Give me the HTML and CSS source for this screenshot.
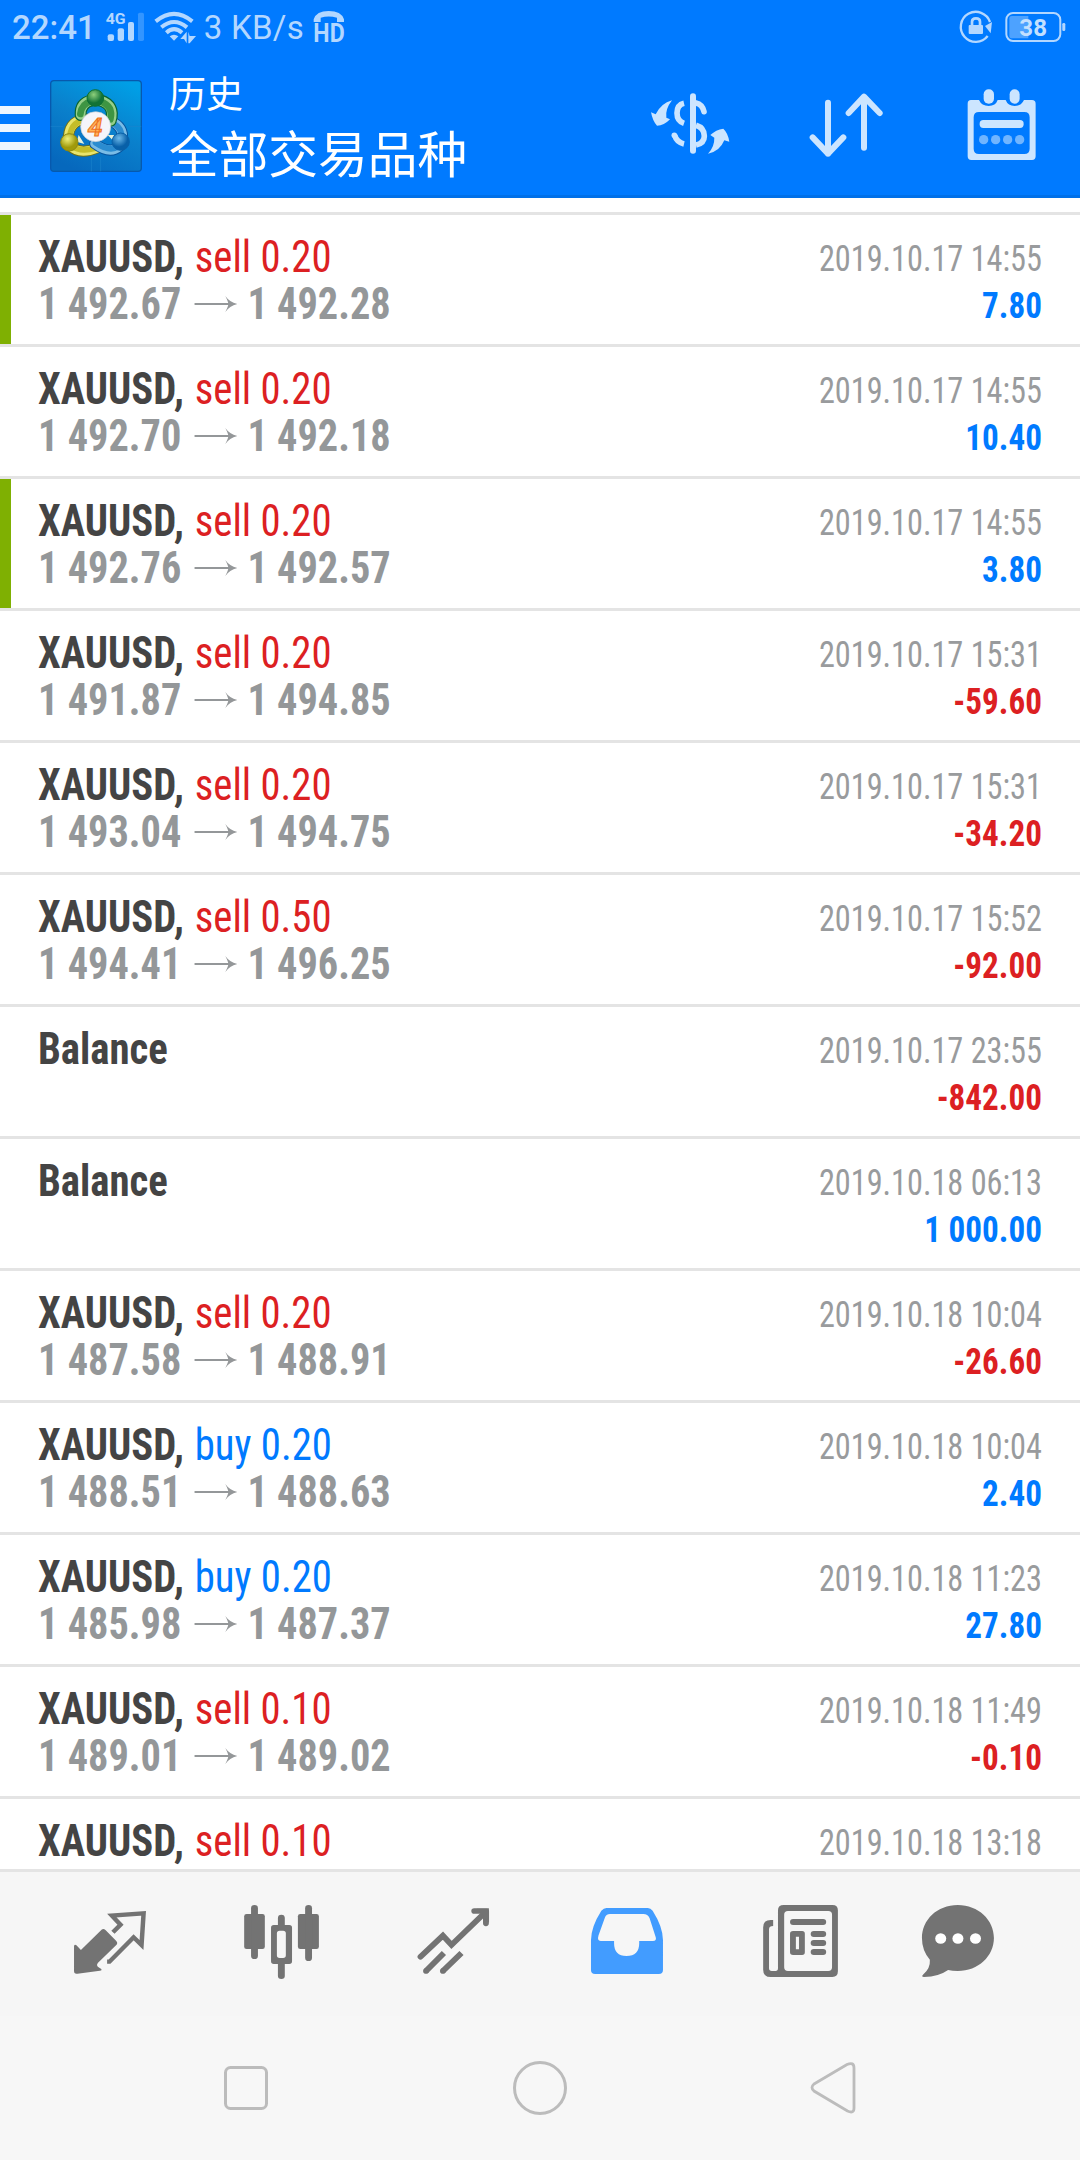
FILE: index.html
```html
<!DOCTYPE html>
<html lang="zh">
<head>
<meta charset="utf-8">
<title>历史</title>
<link rel="stylesheet" href="styles.css">
</head>
<body>
<svg width="0" height="0" class="defs">
  <symbol id="arrow" viewBox="0 0 43 18" preserveAspectRatio="none"><path d="M0 9h36" stroke="#949799" stroke-width="2" fill="none"/><path d="M31 1Q35 7 43 9Q35 11 31 17Q34 11 34 9Q34 7 31 1Z" fill="#949799"/></symbol>
</svg>
<header class="top">
  <div class="status">
    <span class="time">22:41</span>
    <svg class="signal" viewBox="318 30 116 100">
      <text x="317" y="71" font-size="43" font-weight="700" textLength="60" lengthAdjust="spacingAndGlyphs" fill="#b3d7ff">4G</text>
      <g fill="#b3d7ff"><rect x="323" y="103" width="19" height="20" rx="6"/><rect x="353" y="85" width="19" height="38" rx="6"/><rect x="384" y="66" width="18" height="57" rx="6"/></g>
      <rect x="414" y="38" width="18" height="85" rx="5" fill="#3395ff"/>
    </svg>
    <svg class="wifi" viewBox="462 30 128 105">
      <g fill="none" stroke="#b3d7ff" stroke-width="12"><path d="M467 64Q522 19 577 64"/><path d="M484 82Q522 50 561 82"/><path d="M499 98Q522 77 546 98"/></g>
      <path d="M509 109Q522 100 535 109L522 122Z" fill="#b3d7ff"/>
      <path d="M541 117L560 95V130L552 117ZM565 95L569 108H588L569 130H565Z" fill="#b3d7ff"/>
    </svg>
    <span class="speed">3 KB/s</span>
    <svg class="hd" viewBox="940 30 96 100">
      <path d="M942 66V58Q950 33 987 33Q1025 33 1033 58V66H1012V53Q987 46 963 53V66Z" fill="#b3d7ff"/>
      <text x="941" y="126" font-size="77" font-weight="700" textLength="94" lengthAdjust="spacingAndGlyphs" fill="#b3d7ff">HD</text>
    </svg>
    <svg class="lock" viewBox="180 30 98 102">
      <path d="M263 108A45 45 0 1 1 270 66" fill="none" stroke="#b3d7ff" stroke-width="7"/>
      <path d="M255 78L276 66L272 100Z" fill="#b3d7ff"/>
      <rect x="206" y="75" width="43" height="27" rx="3" fill="#b3d7ff"/>
      <path d="M216 76V65Q216 55 228 55Q240 55 240 65V76" fill="none" stroke="#b3d7ff" stroke-width="8"/>
    </svg>
    <svg class="battery" viewBox="314 30 184 102">
      <path d="M327 55Q327 48 335 48H384V115H335Q327 115 327 107Z" fill="#4da2ff"/>
      <rect x="318" y="39" width="162" height="84" rx="20" fill="none" stroke="#b3d7ff" stroke-width="6"/>
      <rect x="486" y="69" width="9" height="24" rx="4" fill="#b3d7ff"/>
      <text x="357" y="107" font-size="71" font-weight="700" textLength="83" lengthAdjust="spacingAndGlyphs" fill="#c3e0ff">38</text>
    </svg>
  </div>
  <div class="bar">
    <div class="menu"><i></i><i></i><i></i></div>
    <svg class="logo" viewBox="150 240 276 276">
      <defs>
        <linearGradient id="bg" x1=".8" y1="0" x2=".3" y2="1"><stop offset="0" stop-color="#009fe6"/><stop offset=".5" stop-color="#0a80cc"/><stop offset="1" stop-color="#0668bd"/></linearGradient>
        <radialGradient id="gg" cx=".4" cy=".3"><stop offset="0" stop-color="#8ed07c"/><stop offset="1" stop-color="#127236"/></radialGradient>
        <radialGradient id="yg" cx=".4" cy=".3"><stop offset="0" stop-color="#f0f07a"/><stop offset="1" stop-color="#a09a0b"/></radialGradient>
        <radialGradient id="ug" cx=".4" cy=".3"><stop offset="0" stop-color="#6cb9ea"/><stop offset="1" stop-color="#0860a8"/></radialGradient>
      </defs>
      <rect x="152" y="242" width="272" height="272" rx="10" fill="url(#bg)" stroke="#0759ad" stroke-width="4"/>
      <path d="M152 379H190M385 379H424M274 472V514M302 472V514" stroke="#1a84cb" stroke-width="2"/>
      <g fill="none" stroke-linecap="round">
        <path d="M262 358Q210 358 205 410M210 437Q238 466 292 444" stroke="#716f13" stroke-width="33"/>
        <path d="M262 358Q210 358 205 410M210 437Q238 466 292 444" stroke="#e9e46c" stroke-width="27"/>
        <path d="M259 361Q215 361 209 410M215 438Q240 457 285 445" stroke="#c5bd28" stroke-width="17"/>
        <path d="M332 363Q373 380 367 420M358 440Q330 465 284 431" stroke="#07539c" stroke-width="33"/>
        <path d="M332 363Q373 380 367 420M358 440Q330 465 284 431" stroke="#7abce6" stroke-width="27"/>
        <path d="M336 369Q368 382 364 418M354 439Q330 457 287 428" stroke="#2b8cd0" stroke-width="18"/>
        <path d="M242 345Q240 309 275 301M300 301Q347 316 332 362" stroke="#0b632d" stroke-width="36"/>
        <path d="M242 345Q240 309 275 301M300 301Q347 316 332 362" stroke="#96cf89" stroke-width="29"/>
        <path d="M241 342Q245 311 275 304M300 304Q341 318 331 358" stroke="#3e9543" stroke-width="20"/>
      </g>
      <path d="M236 405L253 432L230 425ZM323 405H342L338 421Z" fill="#e6f2db"/>
      <circle cx="286" cy="294" r="25" fill="url(#gg)" stroke="#0d7133" stroke-width="3"/>
      <circle cx="208" cy="427" r="26" fill="url(#yg)" stroke="#8f8912" stroke-width="3"/>
      <circle cx="362" cy="425" r="26" fill="url(#ug)" stroke="#0960a8" stroke-width="3"/>
      <circle cx="287" cy="380" r="45" fill="#f5f5fa" stroke="#c3cbd2" stroke-width="2"/>
      <text x="263" y="407" font-size="76" font-weight="700" font-style="italic" textLength="44" lengthAdjust="spacingAndGlyphs" fill="#ffb45c" stroke="#ee701c" stroke-width="3">4</text>
    </svg>
    <div class="heads"><div class="h1">历史</div><div class="h2">全部交易品种</div></div>
    <svg class="dollar" viewBox="90 70 240 184" fill="#cce5ff">
      <rect x="210" y="71" width="18" height="181" rx="9"/>
      <g fill="none" stroke="#cce5ff" stroke-width="17"><path d="M192 101Q171 106 171 130Q171 154 192 161"/><path d="M228 100Q247 104 252 126" stroke-linecap="round"/><path d="M228 167Q253 175 253 199Q253 221 228 226"/><path d="M164 197Q170 218 192 223"/></g><circle cx="163" cy="197" r="8.5"/>
      <path d="M156 92Q135 119 139 144L150 149Q132 168 111 168Q98 155 93 128L107 134Q123 101 156 92Z"/>
      <path d="M264 252Q284 231 283 204L271 196Q288 180 310 177Q324 190 328 216L313 212Q299 246 264 252Z"/>
    </svg>
    <svg class="sort" viewBox="567 70 222 194"><path d="M624 99V252M578 203L624 252L670 203M732 234V82M686 130L732 81L779 130" fill="none" stroke="#cce5ff" stroke-width="18" stroke-linecap="round" stroke-linejoin="round"/></svg>
    <svg class="calendar" viewBox="202 267 208 216">
      <path fill="#cce5ff" fill-rule="evenodd" d="M214 300H238Q246 318 267 318Q288 318 294 300H318Q325 318 345 318Q365 318 373 300H397Q408 300 408 311V469Q408 480 397 480H215Q204 480 204 469V311Q204 300 214 300ZM238 336Q222 336 222 352V446Q222 462 238 462H374Q390 462 390 446V352Q390 336 374 336Z"/>
      <rect x="252" y="268" width="31" height="43" rx="15" fill="#cce5ff"/><rect x="330" y="268" width="30" height="43" rx="15" fill="#cce5ff"/>
      <rect x="240" y="360" width="132" height="24" rx="11" fill="#cce5ff"/>
      <g fill="#70b5ff"><circle cx="252" cy="419" r="14"/><circle cx="288" cy="419" r="14"/><circle cx="324" cy="419" r="14"/><circle cx="360" cy="419" r="14"/></g>
    </svg>
  </div>
</header>
<main class="list">
  <div class="row marked"><div class="deal"><div class="name"><b>XAUUSD,</b> <span class="sell">sell 0.20</span></div><div class="price">1 492.67<svg><use href="#arrow"/></svg>1 492.28</div></div><div class="info"><div class="date">2019.10.17 14:55</div><div class="sum up">7.80</div></div></div>
  <div class="row"><div class="deal"><div class="name"><b>XAUUSD,</b> <span class="sell">sell 0.20</span></div><div class="price">1 492.70<svg><use href="#arrow"/></svg>1 492.18</div></div><div class="info"><div class="date">2019.10.17 14:55</div><div class="sum up">10.40</div></div></div>
  <div class="row marked"><div class="deal"><div class="name"><b>XAUUSD,</b> <span class="sell">sell 0.20</span></div><div class="price">1 492.76<svg><use href="#arrow"/></svg>1 492.57</div></div><div class="info"><div class="date">2019.10.17 14:55</div><div class="sum up">3.80</div></div></div>
  <div class="row"><div class="deal"><div class="name"><b>XAUUSD,</b> <span class="sell">sell 0.20</span></div><div class="price">1 491.87<svg><use href="#arrow"/></svg>1 494.85</div></div><div class="info"><div class="date">2019.10.17 15:31</div><div class="sum down">-59.60</div></div></div>
  <div class="row"><div class="deal"><div class="name"><b>XAUUSD,</b> <span class="sell">sell 0.20</span></div><div class="price">1 493.04<svg><use href="#arrow"/></svg>1 494.75</div></div><div class="info"><div class="date">2019.10.17 15:31</div><div class="sum down">-34.20</div></div></div>
  <div class="row"><div class="deal"><div class="name"><b>XAUUSD,</b> <span class="sell">sell 0.50</span></div><div class="price">1 494.41<svg><use href="#arrow"/></svg>1 496.25</div></div><div class="info"><div class="date">2019.10.17 15:52</div><div class="sum down">-92.00</div></div></div>
  <div class="row"><div class="deal"><div class="name"><b>Balance</b></div></div><div class="info"><div class="date">2019.10.17 23:55</div><div class="sum down">-842.00</div></div></div>
  <div class="row"><div class="deal"><div class="name"><b>Balance</b></div></div><div class="info"><div class="date">2019.10.18 06:13</div><div class="sum up">1 000.00</div></div></div>
  <div class="row"><div class="deal"><div class="name"><b>XAUUSD,</b> <span class="sell">sell 0.20</span></div><div class="price">1 487.58<svg><use href="#arrow"/></svg>1 488.91</div></div><div class="info"><div class="date">2019.10.18 10:04</div><div class="sum down">-26.60</div></div></div>
  <div class="row"><div class="deal"><div class="name"><b>XAUUSD,</b> <span class="buy">buy 0.20</span></div><div class="price">1 488.51<svg><use href="#arrow"/></svg>1 488.63</div></div><div class="info"><div class="date">2019.10.18 10:04</div><div class="sum up">2.40</div></div></div>
  <div class="row"><div class="deal"><div class="name"><b>XAUUSD,</b> <span class="buy">buy 0.20</span></div><div class="price">1 485.98<svg><use href="#arrow"/></svg>1 487.37</div></div><div class="info"><div class="date">2019.10.18 11:23</div><div class="sum up">27.80</div></div></div>
  <div class="row"><div class="deal"><div class="name"><b>XAUUSD,</b> <span class="sell">sell 0.10</span></div><div class="price">1 489.01<svg><use href="#arrow"/></svg>1 489.02</div></div><div class="info"><div class="date">2019.10.18 11:49</div><div class="sum down">-0.10</div></div></div>
  <div class="row"><div class="deal"><div class="name"><b>XAUUSD,</b> <span class="sell">sell 0.10</span></div></div><div class="info"><div class="date">2019.10.18 13:18</div></div></div>
</main>
<nav class="tabs">
  <svg viewBox="203.3 366 232.3 240" preserveAspectRatio="none"><path d="M222 496L235 510L292 452Q299 443 307 451L337 482Q344 489 337 496L284 549Q279 555 284 560L294 567Q297 572 290 572L225 581Q215 583 215 573V499Q216 492 222 496Z" fill="#737373"/><path d="M328 457L350 434L325 407L417 400L411 495L388 472L318 545H311" fill="none" stroke="#737373" stroke-width="13"/></svg>
  <svg viewBox="702.7 366 232.3 240" preserveAspectRatio="none"><g fill="#737373"><rect x="709" y="402" width="60" height="105" rx="7"/><rect x="729" y="375" width="20" height="162" rx="10"/><rect x="865" y="402" width="61" height="105" rx="7"/><rect x="886" y="375" width="20" height="168" rx="10"/><rect x="807" y="404" width="20" height="40" rx="10"/><path d="M807 545H827V588Q827 597 817 597Q807 597 807 588Z"/><path fill-rule="evenodd" d="M795 435H840Q848 435 848 443V544Q848 552 840 552H795Q787 552 787 544V443Q787 435 795 435ZM812 452Q804 452 804 460V526Q804 534 812 534H822Q830 534 830 526V460Q830 452 822 452Z"/></g></svg>
  <svg viewBox="1202.1 366 232.3 240" preserveAspectRatio="none"><g fill="none" stroke="#737373" stroke-width="17"><path d="M1221 530L1286 467L1311 495L1410 396" stroke-linecap="round"/><path d="M1377 393H1411V430" stroke-linecap="round"/><path d="M1289 519L1237 573M1340 519L1286 573"/></g><path d="M1384 386H1412Q1420 386 1420 394V428L1400 404Z" fill="#737373"/><g fill="#737373"><circle cx="1237" cy="573" r="8.5"/><circle cx="1286" cy="573" r="8.5"/></g></svg>
  <svg viewBox="133.5 366 232.3 240" preserveAspectRatio="none"><path fill="#429cff" fill-rule="evenodd" d="M193 384H313Q321 384 327 392Q357 441 357 480V570Q357 582 345 582H160Q148 582 148 570V480Q148 441 178 392Q185 384 193 384ZM203 402Q193 402 189 411L170 466Q165 483 176 483H215V490Q215 528 251 528Q288 528 288 490V483H328Q339 483 336 472L318 414Q313 402 300 402Z"/></svg>
  <svg viewBox="633 366 232.3 240" preserveAspectRatio="none"><g fill="#737373"><path fill-rule="evenodd" d="M708 375H849Q865 375 865 391V574Q865 591 849 591H670Q648 591 648 569V442Q648 420 670 420H677V438Q665 438 665 448V565Q665 573 673 573H684Q691 573 691 565V391Q691 375 708 375ZM720 393Q709 393 709 404V562Q709 573 720 573H837Q848 573 848 562V404Q848 393 837 393Z"/><rect x="726" y="417" width="105" height="18" rx="9"/><path fill-rule="evenodd" d="M735 453H761Q769 453 769 461V517Q769 525 761 525H735Q726 525 726 517V461Q726 453 735 453ZM743 470V508H752V470Z"/><rect x="786" y="453" width="45" height="18" rx="9"/><rect x="786" y="480" width="45" height="18" rx="9"/><rect x="786" y="507" width="45" height="18" rx="9"/></g></svg>
  <svg viewBox="1132.4 366 232.3 240" preserveAspectRatio="none"><path d="M1213 375C1273 375 1318 420 1318 474C1318 528 1273 573 1213 573Q1197 573 1185 570Q1158 590 1115 591Q1106 590 1112 584Q1134 565 1132 539Q1109 512 1109 474C1109 420 1153 375 1213 375Z" fill="#737373"/><g fill="#fff"><circle cx="1163.500" cy="475.500" r="16"/><circle cx="1213.500" cy="475.500" r="16"/><circle cx="1264.500" cy="475.500" r="16"/></g></svg>
</nav>
<footer class="system">
  <svg viewBox="0 0 60 60"><rect x="9.500" y="9.500" width="41" height="41" rx="5" fill="none" stroke="#bcbcbc" stroke-width="3"/></svg>
  <svg viewBox="0 0 60 60"><circle cx="30" cy="30" r="25.500" fill="none" stroke="#bcbcbc" stroke-width="3"/></svg>
  <svg viewBox="0 0 60 60"><path d="M10 26L43 6.500Q50 3.500 50 10V50Q50 56 43.500 53L10 33Q6 29.500 10 26Z" fill="none" stroke="#bcbcbc" stroke-width="2.800"/></svg>
</footer>
</body>
</html>
```

FILE: styles.css
```css
* { box-sizing: border-box; }
body {
  margin: 0;
  width: 1080px;
  height: 2160px;
  overflow: hidden;
  display: flex;
  flex-direction: column;
  background: #fff;
  font-family: Roboto, "Noto Sans CJK SC", sans-serif;
}
svg { display: block; overflow: visible; flex: none; }
.defs { position: absolute; }

.top {
  height: 198px;
  flex: none;
  background: #007aff;
  border-bottom: 3px solid #0070e8;
}
.status {
  display: flex;
  height: 56px;
  padding: 10px 14px 0 12px;
  color: #b3d7ff;
  font-size: 33px;
  line-height: 36px;
  white-space: nowrap;
}
.time { width: 94px; font-weight: 500; letter-spacing: 0; }
.signal { width: 38.7px; height: 33.3px; }
.wifi { width: 42.7px; height: 35px; margin-left: 9.3px; }
.speed { width: 109px; margin-left: 7px; letter-spacing: 0.3px; }
.hd { width: 32px; height: 33.3px; }
.lock { width: 32.7px; height: 34px; margin-left: auto; }
.battery { width: 61.3px; height: 34px; margin-left: 12px; }

.bar { display: flex; align-items: flex-start; height: 139px; }
.menu {
  width: 30px;
  margin-top: 50px;
  display: flex;
  flex-direction: column;
  gap: 10px;
}
.menu i { height: 8px; background: #eef6ff; }
.logo { width: 92px; height: 92px; margin: 24px 0 0 20px; }
.heads { width: 481px; margin-left: 27px; color: #fff; white-space: nowrap; }
.h1 { margin-top: 15px; font-size: 37px; line-height: 50px; }
.h2 { margin-top: 1px; font-size: 49.7px; line-height: 68px; }
.dollar { width: 80px; height: 61.3px; margin: 37.3px 0 0 0; }
.sort { width: 74px; height: 64.7px; margin: 37.3px 0 0 79px; }
.calendar { width: 69.3px; height: 72px; margin: 33px 0 0 84.3px; }

.list {
  height: 1671px;
  flex: none;
  padding-top: 14px;
  overflow: hidden;
}
.row {
  position: relative;
  display: flex;
  justify-content: space-between;
  height: 132px;
  padding: 0 38px;
  border-top: 3px solid #e4e4e4;
  font-stretch: 75%;
  line-height: 47px;
  white-space: nowrap;
}
.marked::before {
  content: "";
  position: absolute;
  left: 0;
  top: 0;
  width: 11px;
  height: 129px;
  background: #7fb002;
}
.deal { padding-top: 18.5px; font-size: 43.6px; }
.info { padding-top: 21px; font-size: 36px; text-align: right; }
.name, .price { transform-origin: left; }
.name { color: #444; transform: scaleX(0.935); }
.name span { margin-left: 1.5px; font-weight: 430; }
.price {
  display: flex;
  align-items: center;
  color: #949799;
  font-weight: 700;
  transform: scaleX(0.925);
}
.price svg { width: 46.5px; height: 18px; margin: 0 11px 0 14px; }
.date, .sum { transform-origin: right; }
.date { color: #999b9d; font-weight: 430; transform: scaleX(0.896); }
.sum { font-weight: 700; transform: scaleX(0.92); }
.sell, .down { color: #dc2022; }
.buy, .up { color: #007aff; }

.tabs {
  height: 147px;
  flex: none;
  display: flex;
  gap: 92px;
  padding: 30px 70px 0;
  border-top: 3px solid #e4e4e4;
  background: #f6f6f6;
}
.tabs svg { width: 80px; height: 80px; }
.system {
  flex: 1;
  display: flex;
  gap: 234px;
  padding: 42px 216px 0;
  background: #f7f7f7;
}
.system svg { width: 60px; height: 60px; }
```
